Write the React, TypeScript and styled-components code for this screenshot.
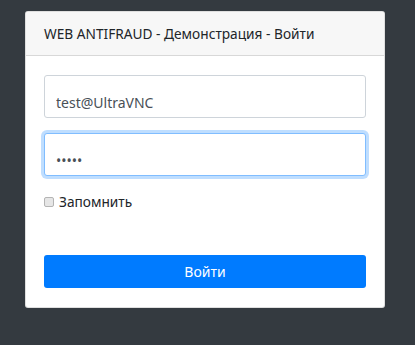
import styled, { createGlobalStyle } from "styled-components";

const GlobalStyle = createGlobalStyle`
  html, body {
    margin: 0;
    padding: 0;
    background: #343a40;
    font-family: "Noto Sans", "Open Sans", sans-serif;
  }
`;

const Page = styled.div`
  width: 415px;
  height: 345px;
  padding: 11px 0 0 25px;
  box-sizing: border-box;
`;

const Card = styled.div`
  width: 360px;
  background: #fff;
  border: 1px solid rgba(0, 0, 0, 0.125);
  border-radius: 3px;
  box-sizing: border-box;
  overflow: hidden;
`;

const CardHeader = styled.div`
  height: 44px;
  box-sizing: border-box;
  padding: 0 18px;
  display: flex;
  align-items: center;
  background: #f7f7f7;
  border-bottom: 1px solid rgba(0, 0, 0, 0.125);
  color: #212529;
  font-size: 13.7px;
`;

const CardBody = styled.div`
  padding: 19px 18px 19px;
  display: flex;
  flex-direction: column;
`;

const Field = styled.input<{ $focused?: boolean }>`
  width: 322px;
  height: 43px;
  box-sizing: border-box;
  padding: 14px 11px 2px;
  font-family: inherit;
  font-size: 14px;
  color: #495057;
  border: 1px solid ${(p) => (p.$focused ? "#80bdff" : "#ced4da")};
  border-radius: 3px;
  outline: none;
  box-shadow: ${(p) => (p.$focused ? "0 0 0 3px rgba(0, 123, 255, 0.25)" : "none")};
  margin-bottom: 15px;
`;

const CheckRow = styled.label`
  display: flex;
  align-items: center;
  gap: 5px;
  font-size: 13.7px;
  color: #212529;
  margin-top: 1px;
`;

const Check = styled.input`
  appearance: none;
  width: 10px;
  height: 10px;
  margin: 0;
  border: 1px solid #b4b4b4;
  border-radius: 2px;
  background: #e6e6e6;
  box-sizing: border-box;
`;

const Submit = styled.button`
  margin-top: 44px;
  width: 322px;
  height: 33px;
  border: none;
  border-radius: 3px;
  background: #007bff;
  color: #fff;
  font-family: inherit;
  font-size: 14px;
`;

export default function App() {
  return (
    <Page>
      <GlobalStyle />
      <Card>
        <CardHeader>WEB ANTIFRAUD - Демонстрация - Войти</CardHeader>
        <CardBody>
          <Field type="text" defaultValue="test@UltraVNC" />
          <Field type="password" defaultValue="12345" $focused />
          <CheckRow>
            <Check type="checkbox" />
            Запомнить
          </CheckRow>
          <Submit>Войти</Submit>
        </CardBody>
      </Card>
    </Page>
  );
}
